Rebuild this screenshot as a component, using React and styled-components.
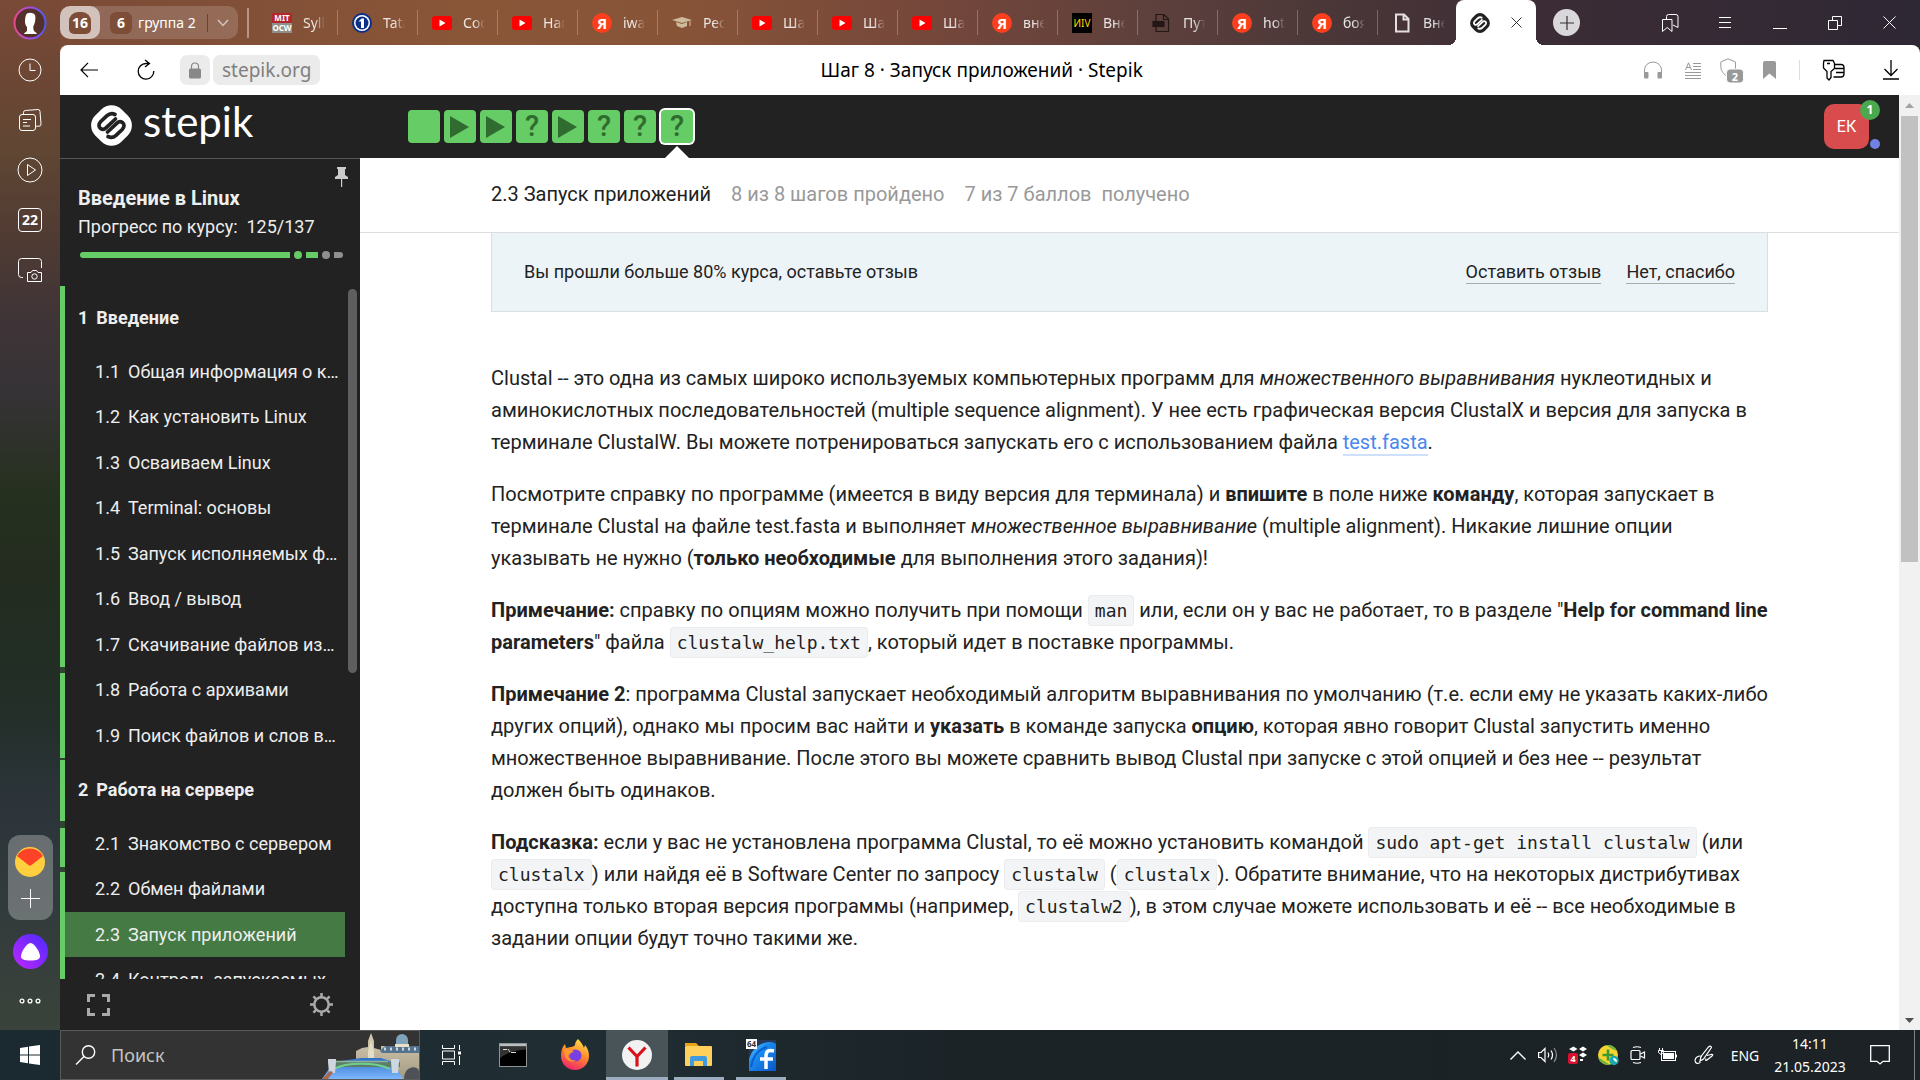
import React from "react";
import styled, { createGlobalStyle, css } from "styled-components";

const ui = `"Noto Sans", "Open Sans", sans-serif`;
const roboto = `Roboto, "Noto Sans", sans-serif`;

const GlobalStyle = createGlobalStyle`
  *, *::before, *::after { box-sizing: border-box; }
  body { margin: 0; overflow: hidden; font-family: ${roboto}; color: #222; }
  button { border: 0; padding: 0; margin: 0; background: none; color: inherit; font: inherit; cursor: pointer; }
  a { color: inherit; text-decoration: none; }
  ul, ol { list-style: none; margin: 0; padding: 0; }
  h1, h2, h3, p { margin: 0; font-size: inherit; font-weight: inherit; }
  svg { display: block; flex: none; }
`;

/* ---------- frame ---------- */

const Desktop = styled.div`
  display: flex;
  flex-direction: column;
  height: 100vh;
`;

const BrowserWindow = styled.div`
  flex: 1;
  min-height: 0;
  display: flex;
`;

const Rail = styled.nav`
  width: 60px;
  padding-bottom: 4px;
  display: flex;
  flex-direction: column;
  align-items: center;
  color: #fff;
  background: linear-gradient(180deg, #7a4a37 0, #6a4634 9%, #5f4633 15%, #523c33 22%, #3f3437 31%, #363336 38%, #26301f 48%, #232c1f 56%, #222e27 68%, #2c343a 78%, #323b3c 88%, #3a433a 100%);
`;

const RailButton = styled.button`
  width: 60px;
  height: 50px;
  display: grid;
  place-items: center;
`;

const ProfileButton = styled(RailButton)`
  height: 45px;
`;

const RailSpacer = styled.div`
  flex: 1;
`;

const PinnedGroup = styled.div`
  width: 45px;
  height: 85px;
  border-radius: 12px;
  background: rgba(255, 255, 255, 0.28);
  display: flex;
  flex-direction: column;
  align-items: center;
  justify-content: space-evenly;
`;

const AliceButton = styled.button`
  margin: 14px 0 7px;
  width: 35px;
  height: 35px;
  border-radius: 50%;
  background: linear-gradient(45deg, #c026ff, #4a2bff);
  display: grid;
  place-items: center;
`;

const DayBox = styled.span`
  width: 24px;
  height: 24px;
  border: 1px solid #fff;
  border-radius: 4px;
  font: 700 14px/22px ${ui};
  text-align: center;
`;

const Main = styled.div`
  flex: 1;
  min-width: 0;
  display: flex;
  flex-direction: column;
  background: linear-gradient(90deg, #7b4b37 0, #8a5638 22%, #885438 33%, #73463b 48%, #5b3f3c 60%, #4b3738 68%, #3b2c35 80%, #2e2834 100%);
`;

/* ---------- tab strip ---------- */

const TabStrip = styled.div`
  height: 45px;
  display: flex;
  align-items: center;
  font-family: ${ui};
  color: #fff;
`;

const TabGroups = styled.div`
  width: 178px;
  height: 33px;
  border-radius: 10px;
  background: rgba(255, 255, 255, 0.16);
  display: flex;
  align-items: center;
  font-size: 14px;
`;

const HomeGroup = styled.button`
  width: 40px;
  height: 33px;
  border-radius: 10px;
  background: rgba(255, 255, 255, 0.6);
  display: grid;
  place-items: center;
`;

const CountBadge = styled.span`
  width: 22px;
  height: 22px;
  border-radius: ${(p) => (p.$home ? "9px 9px 5px 5px" : "6px")};
  background: #7d4d38;
  font-weight: 700;
  line-height: 22px;
  text-align: center;
`;

const GroupButton = styled.button`
  flex: 1;
  height: 33px;
  padding-left: 10px;
  display: flex;
  align-items: center;
  gap: 6px;
  white-space: nowrap;
`;

const GroupMenu = styled.button`
  width: 31px;
  height: 18px;
  border-left: 1px solid rgba(70, 40, 30, 0.6);
  display: grid;
  place-items: center;
`;

const StripDivider = styled.span`
  width: 2px;
  height: 30px;
  margin: 0 9px;
  background: rgba(255, 255, 255, 0.4);
`;

const Tab = styled.button`
  width: ${(p) => (p.$last ? 78 : 80)}px;
  height: 25px;
  padding-left: 14px;
  display: flex;
  align-items: center;
  gap: 11px;
  border-right: 1px solid ${(p) => (p.$last ? "transparent" : "rgba(255, 255, 255, 0.25)")};
`;

const TabTitle = styled.span`
  width: 22px;
  overflow: hidden;
  white-space: nowrap;
  text-align: left;
  font-size: 14px;
  line-height: 20px;
  color: rgba(255, 255, 255, 0.85);
  mask-image: linear-gradient(90deg, #000 50%, transparent 100%);
`;

const ActiveTab = styled.div`
  position: relative;
  width: 80px;
  height: 45px;
  padding: 0 14px;
  border-radius: 8px 8px 0 0;
  background: #fff;
  color: #333;
  display: flex;
  align-items: center;
  justify-content: space-between;
  &::before,
  &::after {
    content: "";
    position: absolute;
    bottom: 0;
    width: 8px;
    height: 8px;
  }
  &::before {
    right: 100%;
    background: radial-gradient(circle at 0 0, transparent 8px, #fff 8px);
  }
  &::after {
    left: 100%;
    background: radial-gradient(circle at 100% 0, transparent 8px, #fff 8px);
  }
`;

const NewTab = styled.button`
  width: 27px;
  height: 27px;
  margin-left: 17px;
  border-radius: 50%;
  background: #dad7da;
  color: #333;
  display: grid;
  place-items: center;
`;

const WindowControls = styled.div`
  margin-left: auto;
  padding-right: 3px;
  display: flex;
`;

const ControlButton = styled.button`
  width: 55px;
  height: 45px;
  display: grid;
  place-items: center;
`;

const favicon = css`
  width: 20px;
  height: 20px;
  flex: none;
  text-align: center;
`;

const YandexIcon = styled.span`
  ${favicon}
  border-radius: 50%;
  background: #fc3f1d;
  font: 700 15px/20px ${ui};
`;

const MitIcon = styled.span`
  ${favicon}
  background: linear-gradient(#b3262b 50%, #8f9189 50%);
  font: 700 8px/10px ${ui};
`;

const NivIcon = styled.span`
  ${favicon}
  background: #000;
  color: #ffd400;
  font: 400 10px/20px ${ui};
`;

/* ---------- address bar ---------- */

const AddressBar = styled.div`
  height: 50px;
  border-radius: 8px 8px 0 0;
  background: #fff;
  color: #000;
  display: flex;
  align-items: center;
  font-family: ${ui};
  font-size: 19px;
`;

const AddressSide = styled.div`
  display: flex;
  align-items: center;
`;

const BarButton = styled.button`
  width: ${(p) => p.$w}px;
  height: 50px;
  display: grid;
  place-items: center;
`;

const AddressPill = styled.button`
  height: 30px;
  padding: 0 9px;
  margin-right: 3px;
  border-radius: 7px;
  background: #ebebeb;
  color: #808080;
  display: flex;
  align-items: center;
`;

const PageTitle = styled.div`
  flex: 1;
  text-align: center;
  line-height: 30px;
  white-space: nowrap;
`;

const BarDivider = styled.span`
  width: 1px;
  height: 20px;
  margin: 0 6px 0 5px;
  background: #ddd;
`;

/* ---------- page ---------- */

const PageArea = styled.div`
  flex: 1;
  min-height: 0;
  display: flex;
  background: #fff;
`;

const Site = styled.div`
  flex: 1;
  min-width: 0;
  display: flex;
  flex-direction: column;
`;

const SiteHeader = styled.header`
  height: 63px;
  background: #222;
  display: flex;
  padding-right: 30px;
`;

const Logo = styled.a`
  width: 348px;
  height: 60px;
  padding-left: 31px;
  display: flex;
  align-items: center;
  gap: 11px;
  color: #fff;
  font: 400 42px/50px Lato, ${ui};
`;

const WordMark = styled.span`
  padding-bottom: 8px;
`;

const Steps = styled.ol`
  display: flex;
  gap: 4px;
  padding-top: 15px;
`;

const Step = styled.a`
  width: 32px;
  height: 33px;
  border-radius: 4px;
  background: #66cc66;
  color: #306b30;
  display: grid;
  place-items: center;
  font: 500 29px/33px ${roboto};
`;

const ActiveStep = styled.li`
  margin: 0 1px;
  display: flex;
  flex-direction: column;
  align-items: center;
  ${Step} {
    box-shadow: 0 0 0 2px #fff;
  }
  &::after {
    content: "";
    margin-top: 3px;
    border: 12px solid transparent;
    border-top: 0;
    border-bottom-color: #fff;
  }
`;

const Account = styled.button`
  position: relative;
  margin: 9px 0 0 auto;
  width: 45px;
  height: 45px;
  border-radius: 10px;
  background: #d94c4d;
  color: #fff;
  font-size: 16px;
`;

const Notice = styled.span`
  position: absolute;
  top: -4px;
  right: -11px;
  width: 20px;
  height: 20px;
  border-radius: 50%;
  background: #4aa84e;
  font: 700 12px/20px ${ui};
`;

const Presence = styled.span`
  position: absolute;
  right: -11px;
  bottom: 0;
  width: 10px;
  height: 10px;
  border-radius: 50%;
  background: #7182e2;
`;

const SiteBody = styled.div`
  flex: 1;
  min-height: 0;
  display: flex;
`;

/* ---------- course sidebar ---------- */

const Sidebar = styled.aside`
  width: 300px;
  background: #222;
  color: #eee;
  border-top: 1px solid #555;
  display: flex;
  flex-direction: column;
  font-size: 18px;
  line-height: 22px;
`;

const CourseHead = styled.div`
  height: 127px;
  padding: 8px 12px 0 18px;
`;

const PinRow = styled.div`
  display: flex;
  justify-content: flex-end;
  height: 20px;
`;

const CourseTitle = styled.h2`
  font-size: 20px;
  font-weight: 700;
  line-height: 22px;
`;

const CourseProgress = styled.p`
  padding-top: 7px;
  line-height: 22px;
`;

const ProgressLine = styled.div`
  display: flex;
  align-items: center;
  gap: 4px;
  padding: 13px 5px 0 2px;
`;

const ProgressPart = styled.span`
  height: ${(p) => (p.$dot ? 8 : 6)}px;
  ${(p) => (p.$dot ? "width: 8px" : `flex: ${p.$grow}`)};
  border-radius: ${(p) => (p.$dot ? "50%" : p.$round || 0)};
  background: ${(p) => (p.$todo ? "#8f8f8f" : "#66cc66")};
`;

const Contents = styled.div`
  flex: 1;
  min-height: 0;
  overflow: hidden;
  display: flex;
`;

const DoneColumn = styled.div`
  width: 5px;
  background: #2f4530;
  display: flex;
  flex-direction: column;
`;

const DonePart = styled.span`
  flex: 0 0 ${(p) => p.$h}px;
  margin-bottom: ${(p) => p.$gap}px;
  background: #66cc66;
`;

const Outline = styled.nav`
  width: 280px;
`;

const SectionTitle = styled.h3`
  height: 63px;
  padding-left: 13px;
  display: flex;
  align-items: center;
  gap: 8px;
  font-weight: 700;
`;

const Lesson = styled.li`
  height: 45px;
  background: ${(p) => (p.$current ? "#457a45" : "none")};
  &:nth-child(even) {
    height: 46px;
  }
`;

const LessonLink = styled.a`
  height: 100%;
  padding-left: 30px;
  display: flex;
  align-items: center;
  white-space: nowrap;
`;

const LessonNumber = styled.span`
  width: 33px;
`;

const ListThumb = styled.div`
  width: 9px;
  height: 384px;
  margin: 3px;
  border-radius: 5px;
  background: #5e5e5e;
`;

const SidebarFoot = styled.div`
  height: 51px;
  padding: 0 27px 0 27px;
  display: flex;
  align-items: center;
  justify-content: space-between;
  color: #aaa;
`;

/* ---------- lesson ---------- */

const LessonPane = styled.main`
  flex: 1;
  min-width: 0;
  font-size: 20px;
  line-height: 32px;
`;

const LessonHead = styled.div`
  height: 75px;
  padding: 4px 131px 6px;
  border-bottom: 1px solid #ddd;
  display: flex;
  align-items: center;
  gap: 20px;
  color: #999;
  white-space: pre;
`;

const LessonTitle = styled.h1`
  color: #222;
`;

const LessonBody = styled.div`
  padding: 0 131px;
`;

const Banner = styled.div`
  height: 79px;
  padding: 0 32px;
  border: 1px solid #dcdfe1;
  border-top: 0;
  background: #edf4f8;
  display: flex;
  align-items: center;
  gap: 25px;
  font-size: 18px;
  line-height: 22px;
`;

const BannerText = styled.p`
  flex: 1;
`;

const BannerLink = styled.a`
  border-bottom: 1px solid #aaa;
`;

const Article = styled.article`
  padding-top: 50px;
  display: flex;
  flex-direction: column;
  gap: 20px;
`;

const FileLink = styled.a`
  color: #4a86f0;
  border-bottom: 2px solid #cfe0fb;
`;

const Code = styled.code`
  padding: 4px 6px;
  border: 1px solid #eaecef;
  border-radius: 4px;
  background: #f3f4f6;
  font: 18px/20px "DejaVu Sans Mono", monospace;
`;

const PageScroll = styled.div`
  width: 21px;
  padding: 8px 2px 7px;
  background: #f1f1f1;
  display: flex;
  flex-direction: column;
  align-items: center;
`;

const PageThumb = styled.div`
  width: 17px;
  height: 446px;
  margin: 8px 0 auto;
  background: #c1c1c1;
`;

/* ---------- taskbar ---------- */

const Taskbar = styled.footer`
  height: 50px;
  display: flex;
  align-items: stretch;
  background: linear-gradient(90deg, #1b2a30 0, #202e34 30%, #1b2327 50%, #1c2226 100%);
  color: #fff;
  font-family: ${ui};
`;

const StartButton = styled.button`
  width: 60px;
  display: grid;
  place-items: center;
`;

const SearchBox = styled.label`
  width: 360px;
  padding-left: 14px;
  border: 1px solid #5a5a5a;
  background: #333;
  display: flex;
  align-items: center;
  gap: 15px;
  overflow: hidden;
`;

const SearchInput = styled.input`
  flex: 1;
  min-width: 0;
  border: 0;
  padding: 0;
  outline: 0;
  background: none;
  color: #ccc;
  font: 18px/24px ${ui};
  &::placeholder {
    color: #c4c4c4;
    opacity: 1;
  }
`;

const TaskButton = styled.button`
  width: 62px;
  display: grid;
  place-items: center;
  background: ${(p) => (p.$active ? "#495458" : "none")};
  position: relative;
  &::after {
    content: "";
    position: absolute;
    bottom: 0;
    left: ${(p) => (p.$active ? 0 : 6)}px;
    right: ${(p) => (p.$active ? 0 : 6)}px;
    height: ${(p) => (p.$open ? 3 : 0)}px;
    background: #9cadc0;
  }
`;

const TaskButtons = styled.div`
  display: flex;
`;

const Tray = styled.div`
  margin-left: auto;
  display: flex;
  align-items: center;
  font-size: 14px;
`;

const TrayButton = styled.button`
  width: ${(p) => p.$w || 30}px;
  height: 50px;
  display: grid;
  place-items: center;
`;

const Clock = styled.button`
  width: 90px;
  line-height: 23px;
  text-align: center;
`;

const ShowDesktop = styled.button`
  width: 6px;
  height: 50px;
  border-left: 1px solid #7d8285;
`;

/* ---------- drawings ---------- */

const Svg = ({ w, h = w, fill = "none", sw = 1, children, box }) => (
  <svg width={w} height={h} viewBox={box || `0 0 ${w} ${h}`} fill={fill} stroke={fill === "none" ? "currentColor" : "none"} strokeWidth={sw} aria-hidden="true">
    {children}
  </svg>
);

const StepikMark = ({ size, body, ink }) => (
  <svg width={size} height={size} viewBox="0 0 41 41" fill="none" aria-hidden="true">
    <rect x="2" y="2" width="37" height="37" rx="14" transform="rotate(45 20.5 20.5)" fill={body} />
    <g stroke={ink} strokeWidth="3.700" strokeLinecap="round" strokeLinejoin="round">
      <path d="M24 9.500c-3-1.600-5.500-1-8 1.200L9.800 16.500c-2.600 2.700-2.200 5.500-.2 7s4 .8 5.400-.6L24.500 14" />
      <path d="M17 31.500c3 1.600 5.500 1 8-1.200l6.200-5.800c2.600-2.700 2.200-5.500.2-7s-4-.8-5.400.6L16.500 27" />
    </g>
  </svg>
);

const YouTube = () => (
  <Svg w={20} fill="#f00">
    <rect y="3" width="20" height="14" rx="3" />
    <path d="M7.500 6.500v7l6-3.500z" fill="#fff" />
  </Svg>
);

const ChannelOne = () => (
  <Svg w={20} fill="#fff">
    <circle cx="10" cy="10" r="10" fill="#0b2f86" />
    <circle cx="10" cy="10" r="8" />
    <circle cx="10" cy="10" r="6.500" fill="#0b2f86" />
    <path d="M9.500 5.500h2.500v9.500H9V8.500H6.500z" />
  </Svg>
);

const Cap = () => (
  <Svg w={20} fill="#cdbb9b">
    <path d="M0 7l10-3 10 3-10 3z" />
    <path d="M4 9l6 2 5-2v4l-5 2-5-2z" />
    <path d="M17.500 8h1v5h-1z" />
  </Svg>
);

const FileIcon = ({ label, color }) => (
  <svg width="20" height="20" viewBox="0 0 20 20" fill="none" stroke={color} strokeWidth={label ? 1.2 : 2} aria-hidden="true">
    <path d="M4 1.500h8l4.500 4.500v12.500H4zM11.500 1.500V6.500H16.500" />
    {label && <rect x="1" y="8.500" width="11" height="5" fill={color} />}
  </svg>
);

const Play = () => (
  <Svg w={20} h={22} fill="currentColor">
    <path d="M0 0v22l19-11z" />
  </Svg>
);

const icons = {
  youtube: <YouTube />,
  ya: <YandexIcon>Я</YandexIcon>,
  mit: <MitIcon>MIT<br />OCW</MitIcon>,
  niv: <NivIcon>ИIV</NivIcon>,
  one: <ChannelOne />,
  cap: <Cap />,
  pdf: <FileIcon label color="#231815" />,
  doc: <FileIcon color="#e6dfe0" />,
};

const tabs = [
  ["mit", "Syll"], ["one", "Tatа"], ["youtube", "Соо"], ["youtube", "Нап"], ["ya", "iwа"],
  ["cap", "Рес"], ["youtube", "Ша"], ["youtube", "Ша"], ["youtube", "Ша"], ["ya", "вне"],
  ["niv", "Вне"], ["pdf", "Пут"], ["ya", "hot"], ["ya", "боя"], ["doc", "Вне"],
];

const sections = [
  {
    n: "1",
    title: "Введение",
    lessons: [
      "Общая информация о к…", "Как установить Linux", "Осваиваем Linux", "Terminal: основы", "Запуск исполняемых ф…",
      "Ввод / вывод", "Скачивание файлов из…", "Работа с архивами", "Поиск файлов и слов в…",
    ],
  },
  {
    n: "2",
    title: "Работа на сервере",
    lessons: ["Знакомство с сервером", "Обмен файлами", "Запуск приложений", "Контроль запускаемых…"],
  },
];

const steps = ["", "play", "play", "?", "play", "?", "?"];

const RailPanel = () => (
  <Rail aria-label="Боковая панель">
    <ProfileButton aria-label="Профиль">
      <Svg w={34}>
        <defs>
          <linearGradient id="ring" x1="0" x2="1">
            <stop offset="0" stopColor="#e8468f" />
            <stop offset=".5" stopColor="#a44fe0" />
            <stop offset="1" stopColor="#4a5cf0" />
          </linearGradient>
        </defs>
        <circle cx="17" cy="17" r="15.500" stroke="url(#ring)" strokeWidth="2" fill="#54302a" />
        <path d="M13 9c1-3 7-3 9 0 1 3 0 8-1 10-1 1-1 4 0 6 1 1 3 2 3 3H11c0-1 2-2 3-3v-4c-3-3-2-9-1-12z" fill="#fff" stroke="none" />
      </Svg>
    </ProfileButton>
    <RailButton aria-label="История"><Svg w={24}><circle cx="12" cy="12" r="11" /><path d="M12 5.500V12.500H17.500" /></Svg></RailButton>
    <RailButton aria-label="Коллекции"><Svg w={24}><rect x="1.500" y="6.500" width="16" height="16" rx="2.500" /><path d="M5.500 6V4.500a2 2 0 0 1 1.700-2L20 1.500a2 2 0 0 1 2 2L23 16a2 2 0 0 1-2 2.200h-3M5 11.500h8M5 14.500h4M5 18h7" /></Svg></RailButton>
    <RailButton aria-label="Музыка"><Svg w={26}><circle cx="13" cy="13" r="12" /><path d="M10.500 7.500v11l8-5.500z" /></Svg></RailButton>
    <RailButton aria-label="Календарь"><DayBox>22</DayBox></RailButton>
    <RailButton aria-label="Снимок"><Svg w={26}><path d="M6 20.500H4.500a3 3 0 0 1-3-3v-13a3 3 0 0 1 3-3h17a3 3 0 0 1 3 3V11" /><path d="M11 15.500h3l1.500-2h4l1.500 2h3.500v9H10.500v-9z" /><circle cx="17.500" cy="19.500" r="2.700" /></Svg></RailButton>
    <RailSpacer />
    <PinnedGroup>
      <button aria-label="Почта">
        <Svg w={30} fill="#ffcf3d"><circle cx="15" cy="15" r="15" /><path d="M2 9a15 15 0 0 1 26 0L16.500 18q-1.500 1-3 0z" fill="#fc4327" /></Svg>
      </button>
      <button aria-label="Добавить"><Svg w={20}><path d="M10.500 1v19M1 10.500h19" /></Svg></button>
    </PinnedGroup>
    <AliceButton aria-label="Алиса">
      <Svg w={19} h={18} fill="#fff"><path d="M9.500 0c4 0 9.500 9.500 9.500 13s-3 4.500-9.500 4.500S0 16.500 0 13 5.500 0 9.500 0z" /></Svg>
    </AliceButton>
    <RailButton aria-label="Ещё"><Svg w={22} h={6} sw={1.3}><circle cx="3" cy="3" r="1.900" /><circle cx="11" cy="3" r="1.900" /><circle cx="19" cy="3" r="1.900" /></Svg></RailButton>
  </Rail>
);

const Tabs = () => (
  <TabStrip>
    <TabGroups>
      <HomeGroup><CountBadge $home>16</CountBadge></HomeGroup>
      <GroupButton><CountBadge>6</CountBadge>группа 2</GroupButton>
      <GroupMenu aria-label="Группы"><Svg w={12} h={8} sw={1.5}><path d="M1 1l5 5.500L11 1" opacity=".6" /></Svg></GroupMenu>
    </TabGroups>
    <StripDivider />
    {tabs.map(([icon, title], i) => (
      <Tab key={i} $last={i === tabs.length - 1}>{icons[icon]}<TabTitle>{title}</TabTitle></Tab>
    ))}
    <ActiveTab>
      <StepikMark size={20} body="#222" ink="#fff" />
      <button aria-label="Закрыть вкладку"><Svg w={11}><path d="M.5.5l10 10M10.500.5l-10 10" /></Svg></button>
    </ActiveTab>
    <NewTab aria-label="Новая вкладка"><Svg w={14} sw={1.2}><path d="M7 0v14M0 7h14" /></Svg></NewTab>
    <WindowControls>
      <ControlButton aria-label="Закладки"><Svg w={18}><path d="M1.500 5.500h9.500v12L6.200 13.500 1.500 17.500zM5.500 5V2.500a2 2 0 0 1 2-2H15a2 2 0 0 1 2 2V13.500l-5-2.500" /></Svg></ControlButton>
      <ControlButton aria-label="Меню"><Svg w={14} h={12}><path d="M1 .5h12M1 5.500h12M1 10.500h12" /></Svg></ControlButton>
      <ControlButton aria-label="Свернуть"><Svg w={14}><path d="M0 12.500h14" /></Svg></ControlButton>
      <ControlButton aria-label="Восстановить"><Svg w={14}><path d="M.5 4.500h9v9h-9zM4.500 4V.5h9v9H10" /></Svg></ControlButton>
      <ControlButton aria-label="Закрыть"><Svg w={13}><path d="M.5.5l12 12M12.500.5l-12 12" /></Svg></ControlButton>
    </WindowControls>
  </TabStrip>
);

const Address = () => (
  <AddressBar>
    <AddressSide>
      <BarButton $w={58} aria-label="Назад"><Svg w={18} h={16} sw={1.2}><path d="M8 .8L1 8l7 7.200M1 8h17" /></Svg></BarButton>
      <BarButton $w={56} aria-label="Обновить"><Svg w={20} h={22} sw={1.3}><path d="M9 1l4.500 3.500L9 8M13 4.500H10A7.800 7.800 0 1 0 17.800 12" /></Svg></BarButton>
      <BarButton $w={6} as="span" />
      <AddressPill aria-label="Защищённое соединение">
        <Svg w={12} h={17} fill="#888"><rect y="6.500" width="12" height="10" rx="1.500" /><path d="M2.500 7V4.500a3.500 3.500 0 0 1 7 0V7" fill="none" stroke="#888" strokeWidth="1.200" /></Svg>
      </AddressPill>
      <AddressPill>stepik.org</AddressPill>
    </AddressSide>
    <PageTitle>Шаг 8 · Запуск приложений · Stepik</PageTitle>
    <AddressSide>
      <BarButton $w={26} aria-label="Слушать"><Svg w={20} h={18}><path d="M1.500 14V9a8.500 8 0 0 1 17 0v5" stroke="#999" /><rect x="1" y="11" width="4.500" height="6.500" rx="1" fill="#999" stroke="none" /><rect x="14.500" y="11" width="4.500" height="6.500" rx="1" fill="#999" stroke="none" /></Svg></BarButton>
      <BarButton $w={54} aria-label="Режим чтения"><Svg w={16} h={17}><path d="M8 1.500h8M8 4.500h8M8 7.500h8M0 10.500h16M0 13.500h16M0 16.500h16M.5 8L3.500.8 6.500 8M1.500 5.500h4" stroke="#999" /></Svg></BarButton>
      <BarButton $w={24} aria-label="Защита">
        <Svg w={24} h={26}>
          <path d="M8 .8L15.500 4v6c0 4-3 7-7.500 9C4 16.500.8 13 .8 8.500V4z" stroke="#999" transform="translate(0 1)" />
          <rect x="6.500" y="12" width="17" height="14" rx="3.500" fill="#999" stroke="#fff" />
          <text x="15" y="23.500" fontSize="11" fontWeight="700" fontFamily="Noto Sans" textAnchor="middle" fill="#fff" stroke="none">2</text>
        </Svg>
      </BarButton>
      <BarButton $w={50} aria-label="В закладки"><Svg w={13} h={18} fill="#999"><path d="M0 2a2 2 0 0 1 2-2h9a2 2 0 0 1 2 2v16l-6.500-5.500L0 18z" /></Svg></BarButton>
      <BarDivider />
      <BarButton $w={55} aria-label="Пароли"><Svg w={24} h={22} sw={1.3}><path d="M2 1.500h9l1.500 3v5L9 12.500v6L7 21l-2-2v-6.500L1.500 9V4zM5 4.500h3" /><path d="M13 5.500h6a3 3 0 0 1 3 3V15a3 3 0 0 1-3 3h-7.500M13 9.500h9M14 13.500h8" /></Svg></BarButton>
      <BarButton $w={59} aria-label="Загрузки"><Svg w={16} h={20} sw={1.3}><path d="M8 0v15M1.500 9L8 15.500 14.500 9M0 19h16" /></Svg></BarButton>
    </AddressSide>
  </AddressBar>
);

const Header = () => (
  <SiteHeader>
    <Logo href="#home" aria-label="stepik">
      <StepikMark size={41} body="#fff" ink="#222" />
      <WordMark>stepik</WordMark>
    </Logo>
    <Steps>
      {steps.map((s, i) => (
        <li key={i}><Step href={`#step-${i + 1}`}>{s === "play" ? <Play /> : s}</Step></li>
      ))}
      <ActiveStep><Step href="#step-8" aria-current="step">?</Step></ActiveStep>
    </Steps>
    <Account>ЕК<Notice>1</Notice><Presence /></Account>
  </SiteHeader>
);

const Course = () => (
  <Sidebar>
    <CourseHead>
      <PinRow>
        <button aria-label="Закрепить"><Svg w={13} h={20} fill="#ccc"><path d="M2 0h9v2H10v6l3 2v2H0v-2l3-2V2H2zM6 12h1.200v8H6z" /></Svg></button>
      </PinRow>
      <CourseTitle>Введение в Linux</CourseTitle>
      <CourseProgress>Прогресс по курсу:&nbsp; 125/137</CourseProgress>
      <ProgressLine>
        <ProgressPart $grow={210} $round="3px 0 0 3px" />
        <ProgressPart $dot />
        <ProgressPart $grow={12} />
        <ProgressPart $dot $todo />
        <ProgressPart $grow={9} $todo $round="0 3px 3px 0" />
      </ProgressLine>
    </CourseHead>
    <Contents>
      <DoneColumn>
        <DonePart $h={381} $gap={6} />
        <DonePart $h={85} $gap={2} />
        <DonePart $h={61} $gap={7} />
        <DonePart $h={39} $gap={5} />
        <DonePart $h={200} $gap={0} />
      </DoneColumn>
      <Outline>
        {sections.map((s) => (
          <section key={s.n}>
            <SectionTitle><span>{s.n}</span>{s.title}</SectionTitle>
            <ul>
              {s.lessons.map((l, i) => (
                <Lesson key={l} $current={s.n === "2" && i === 2}>
                  <LessonLink href={`#lesson-${s.n}-${i + 1}`}><LessonNumber>{s.n}.{i + 1}</LessonNumber>{l}</LessonLink>
                </Lesson>
              ))}
            </ul>
          </section>
        ))}
      </Outline>
      <ListThumb />
    </Contents>
    <SidebarFoot>
      <button aria-label="На весь экран"><Svg w={23} h={22} sw={3}><path d="M1.500 8V1.500H8M15 1.500h6.500V8M21.500 14v6.500H15M8 20.500H1.500V14" /></Svg></button>
      <button aria-label="Настройки">
        <Svg w={23} sw={2.5}>
          <circle cx="11.500" cy="11.500" r="7.200" />
          <path d="M11.500 0v4M11.500 19v4M0 11.500h4M19 11.500h4M3.400 3.400l2.500 2.500M17.100 17.100l2.500 2.500M3.400 19.600l2.500-2.500M17.100 5.900l2.500-2.500" />
        </Svg>
      </button>
    </SidebarFoot>
  </Sidebar>
);

const LessonText = () => (
  <Article>
    <p>
      Clustal -- это одна из самых широко используемых компьютерных программ для <em>множественного выравнивания</em> нуклеотидных и
      аминокислотных последовательностей (multiple sequence alignment). У нее есть графическая версия ClustalX и версия для запуска в
      терминале ClustalW. Вы можете потренироваться запускать его с использованием файла <FileLink href="#file">test.fasta</FileLink>.
    </p>
    <p>
      Посмотрите справку по программе (имеется в виду версия для терминала) и <b>впишите</b> в поле ниже <b>команду</b>, которая запускает в
      терминале Clustal на файле test.fasta и выполняет <em>множественное выравнивание</em> (multiple alignment). Никакие лишние опции
      указывать не нужно (<b>только необходимые</b> для выполнения этого задания)!
    </p>
    <p>
      <b>Примечание:</b> справку по опциям можно получить при помощи <Code>man</Code> или, если он у вас не работает, то в разделе
      "<b>Help for command line parameters</b>" файла <Code>clustalw_help.txt</Code>, который идет в поставке программы.
    </p>
    <p>
      <b>Примечание 2</b>: программа Clustal запускает необходимый алгоритм выравнивания по умолчанию (т.е. если ему не указать каких-либо
      других опций), однако мы просим вас найти и <b>указать</b> в команде запуска <b>опцию</b>, которая явно говорит Clustal запустить именно
      множественное выравнивание. После этого вы можете сравнить вывод Clustal при запуске с этой опцией и без нее -- результат
      должен быть одинаков.
    </p>
    <p>
      <b>Подсказка:</b> если у вас не установлена программа Clustal, то её можно установить командой <Code>sudo apt-get install clustalw</Code> (или{" "}
      <Code>clustalx</Code>) или найдя её в Software Center по запросу <Code>clustalw</Code> (<Code>clustalx</Code>). Обратите внимание, что на
      некоторых дистрибутивах доступна только вторая версия программы (например, <Code>clustalw2</Code>), в этом случае можете использовать
      и её -- все необходимые в задании опции будут точно такими же.
    </p>
  </Article>
);

const City = () => (
  <svg width="97" height="48" viewBox="0 0 97 48" aria-hidden="true">
    <defs>
      <linearGradient id="water" x1="0" x2="0" y1="0" y2="1"><stop offset="0" stopColor="#2f6fc4" /><stop offset="1" stopColor="#7db8ff" /></linearGradient>
      <linearGradient id="stone" x1="0" x2="0" y1="0" y2="1"><stop offset="0" stopColor="#d8cdb4" /><stop offset="1" stopColor="#a39a82" /></linearGradient>
    </defs>
    <path d="M34 30V20l6-3 6-1V10l3-8 3 8v7l7 2V15h38v33H50z" fill="url(#stone)" />
    <path d="M58 20l5-5h34v7H60z" fill="#54718d" />
    <path d="M62 18h35" stroke="#c8d6df" strokeWidth="3" strokeDasharray="2 4" />
    <path d="M74 14V9a6 6 0 0 1 12 0v5z" fill="#7fa2bd" />
    <path d="M73 13h14v3H73z" fill="#e9e0c8" />
    <path d="M46 20l3-11 3 11v10h-6z" fill="#e5dcc5" />
    <path d="M0 48L9 35l10-5 20-3h20l12 4 10 17z" fill="url(#water)" />
    <path d="M8 31h70v5H8z" fill="#5c7d6a" />
    <path d="M12 38c12-7 42-7 56 0" fill="none" stroke="#6fd08c" strokeWidth="2" />
    <path d="M12 30.500h54" stroke="#8fb39b" strokeWidth="1.500" />
    <path d="M82 48c0-14 14-14 15-8v8z" fill="#4e5257" />
    <path d="M6 28h8v3l-1 11H7L6 31zM69 28h8v3l-1 11h-6l-1-11z" fill="#cfd6df" />
    <path d="M0 48l8-8 3 1-5 7z" fill="#b0664a" />
  </svg>
);

const SystemBar = () => (
  <Taskbar>
    <StartButton aria-label="Пуск"><Svg w={20} fill="#fff"><path d="M0 3l8-1.200V9.500H0zM9 1.600L20 0v9.500H9zM0 10.500h8v7.700L0 17zM9 10.500h11V20L9 18.400z" /></Svg></StartButton>
    <SearchBox>
      <Svg w={21} h={20} sw={1.4}><circle cx="13.500" cy="7" r="6.200" /><path d="M9 11.500L1 19.500" /></Svg>
      <SearchInput type="text" placeholder="Поиск" aria-label="Поиск" />
      <City />
    </SearchBox>
    <TaskButtons>
      <TaskButton aria-label="Представление задач">
        <Svg w={21} h={20}><path d="M1.500 0v3.500h12V0M1.500 20v-3.500h12V20M1.500 6h12v8h-12zM18.500 0v5M18.500 11v9" /><rect x="17" y="6.500" width="3" height="3" fill="currentColor" stroke="none" /></Svg>
      </TaskButton>
      <TaskButton aria-label="Командная строка">
        <Svg w={28} h={24} fill="#000"><rect x=".5" y=".5" width="27" height="23" stroke="#8f9496" /><path d="M1 1h26v2.500H1z" fill="#b9bec1" /><path d="M1 3.500h26v3C17 7 10 9 1 15z" fill="#333" /><path d="M4 6.500h4M9 6l2 3M12 9.500h5" stroke="#ddd" fill="none" /></Svg>
      </TaskButton>
      <TaskButton aria-label="Firefox">
        <Svg w={30} h={32} fill="#ff5a3c">
          <defs><linearGradient id="fox" x1=".7" x2=".3" y1="0" y2="1"><stop offset="0" stopColor="#ffe14a" /><stop offset=".45" stopColor="#ff8b2b" /><stop offset="1" stopColor="#f0226e" /></linearGradient></defs>
          <path d="M18 0c3 3 5 6 6 9l1-3c3 4 4 7 4 11A14 14 0 0 1 1 17C1 12 2 8 5 5l1 4 5-1c2 0 3-1 4-2 0-2 1-4 3-6z" fill="url(#fox)" />
          <circle cx="15.500" cy="16.500" r="6" fill="#7a3fe0" />
          <path d="M4 11c4-2 8 0 10 2-3 0-4 2-6 3 0 4 4 6 8 5-5 4-12 0-12-10z" fill="#ff9a2e" />
        </Svg>
      </TaskButton>
      <TaskButton $active $open aria-label="Яндекс Браузер">
        <Svg w={30} fill="#f2f2f2"><circle cx="15" cy="15" r="15" /><path d="M6.500 7.500L15 16.500 23.500 7.500M15 16v10.500" fill="none" stroke="#d8121b" strokeWidth="3.200" /></Svg>
      </TaskButton>
      <TaskButton $open aria-label="Проводник">
        <Svg w={28} h={24} fill="#ffd05c"><path d="M0 0h11l3 3H0z" fill="#e8a317" /><rect y="3" width="27" height="20" rx="1" /><path d="M5 23v-8a2 2 0 0 1 2-2h13a2 2 0 0 1 2 2v8h-4v-5H9v5z" fill="#3f9be0" /></Svg>
      </TaskButton>
      <TaskButton $open aria-label="FX">
        <Svg w={30} h={32} fill="#0c7fe6">
          <defs><linearGradient id="fx" x1="0" x2="1" y1="0" y2="1"><stop offset="0" stopColor="#7fd6ff" /><stop offset=".35" stopColor="#1b8ff0" /><stop offset="1" stopColor="#0a55c8" /></linearGradient></defs>
          <rect x="3" y="1" width="27" height="31" fill="#26385a" />
          <path d="M3 32V20C6 10 14 3 24 3q4 0 6 2v27z" fill="url(#fx)" />
          <path d="M5 28C7 17 13 10 21 8" fill="none" stroke="#0a5cd0" strokeWidth="2" />
          <path d="M28 12c-6-1.500-8 .5-8 5v13M14 20h13" fill="none" stroke="#fff" strokeWidth="3.500" />
          <rect width="11" height="10" fill="#fff" />
          <text x="5.500" y="8" fontSize="8" fontWeight="700" fontFamily="Noto Sans" textAnchor="middle" fill="#333">64</text>
        </Svg>
      </TaskButton>
    </TaskButtons>
    <Tray>
      <TrayButton aria-label="Скрытые значки"><Svg w={16} h={9} sw={1.4}><path d="M.5 8.500L8 1l7.500 7.500" /></Svg></TrayButton>
      <TrayButton aria-label="Громкость"><Svg w={20} h={16} sw={1.2}><path d="M.6 5.500H3L7 1.500v13L3 10.500H.6z" /><path d="M10 5.500q1.500 2.500 0 5M13 3.500q3 4.500 0 9" /><path d="M16 1q5 7 0 14" opacity=".5" /></Svg></TrayButton>
      <TrayButton aria-label="Dropbox"><Svg w={20} fill="#fff"><path d="M1 4l4.500-2.500L9.500 4 5.500 6.500zM11 4l4-2.500L19 4l-4 2.500zM11 10l4-2.500L19 10l-4 2.500zM12 14h3v2h-3z" /><rect y="8" width="10" height="11" rx="2" fill="#d9102f" /><text x="5" y="17" fontSize="9" fontWeight="700" fontFamily="Noto Sans" textAnchor="middle">4</text></Svg></TrayButton>
      <TrayButton aria-label="Антивирус"><Svg w={21} fill="#f7d430"><circle cx="10" cy="10" r="10" /><path d="M8 0a10 10 0 0 1 11 6L14 4zM0 12q6 4 12 7.700A10 10 0 0 1 0 12z" fill="#6db33f" /><path d="M8.700 4.500h2.600v4.200h4.200v2.600h-4.200v4.200H8.700v-4.200H4.500V8.700h4.200z" fill="#3c9a35" /><circle cx="16" cy="15.500" r="4.700" fill="#18a9b0" /><path d="M15 13q4 0 4 4-3 0-4-4z" fill="#fff" /></Svg></TrayButton>
      <TrayButton aria-label="Камера"><Svg w={16} h={18} sw={1.2}><rect x="1" y="4.500" width="9" height="9" rx="1" /><path d="M10.500 8l4-2v6l-4-2M3 1.500q4-1.500 8 0M3 16.500q4 1.500 8 0" /></Svg></TrayButton>
      <TrayButton aria-label="Питание"><Svg w={20} h={14}><rect x="3.500" y="3.500" width="14" height="9" /><path d="M18.500 6.500v3" /><rect x="5" y="5" width="11" height="6" fill="currentColor" stroke="none" /><path d="M1.500 0v2M4.500 0v2M.5 2.500h5v2l-2.500 2-2.500-2z" /></Svg></TrayButton>
      <TrayButton $w={42} aria-label="Рукописный ввод"><Svg w={20} sw={1.2}><path d="M8 11.500c-3-1.500-7 1-7 4s3.500 4 5.500 1.500M6 16l1-4.500L14.500 2q2-2 3 .5L9.500 14z" /><path d="M12 13.500q-1 3 1 1.500l5-4q2-2-1-1.500l-4 1" /></Svg></TrayButton>
      <TrayButton $w={40}>ENG</TrayButton>
      <Clock>14:11<br />21.05.2023</Clock>
      <TrayButton $w={50} aria-label="Уведомления"><Svg w={20} sw={1.3}><path d="M.7.7h18.600v15.600H13L10 19l-3-2.700H.7z" /></Svg></TrayButton>
      <TrayButton $w={9} as="span" />
      <ShowDesktop aria-label="Рабочий стол" />
    </Tray>
  </Taskbar>
);

export default function App() {
  return (
    <Desktop>
      <GlobalStyle />
      <BrowserWindow>
        <RailPanel />
        <Main>
          <Tabs />
          <Address />
          <PageArea>
            <Site>
              <Header />
              <SiteBody>
                <Course />
                <LessonPane>
                  <LessonHead>
                    <LessonTitle>2.3 Запуск приложений</LessonTitle>
                    <span>8 из 8 шагов пройдено</span>
                    <span>{"7 из 7 баллов  получено"}</span>
                  </LessonHead>
                  <LessonBody>
                    <Banner>
                      <BannerText>Вы прошли больше 80% курса, оставьте отзыв</BannerText>
                      <BannerLink href="#review">Оставить отзыв</BannerLink>
                      <BannerLink href="#dismiss">Нет, спасибо</BannerLink>
                    </Banner>
                    <LessonText />
                  </LessonBody>
                </LessonPane>
              </SiteBody>
            </Site>
            <PageScroll>
              <Svg w={9} h={5} fill="#a3a3a3"><path d="M0 5L4.500 0 9 5z" /></Svg>
              <PageThumb />
              <Svg w={9} h={5} fill="#505050"><path d="M0 0h9L4.500 5z" /></Svg>
            </PageScroll>
          </PageArea>
        </Main>
      </BrowserWindow>
      <SystemBar />
    </Desktop>
  );
}
